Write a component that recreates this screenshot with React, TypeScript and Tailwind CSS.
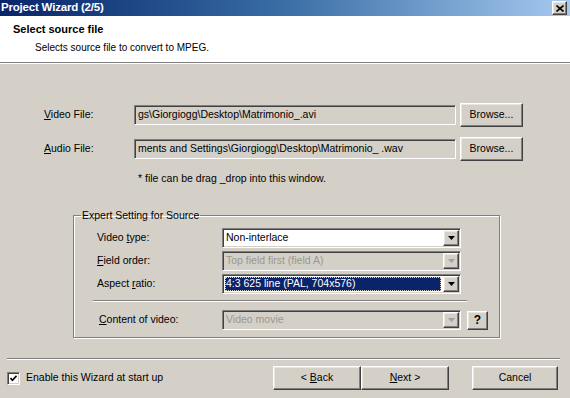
const raised =
  'border border-t-white border-l-white border-r-[#404040] border-b-[#404040] shadow-[inset_-1px_-1px_0_#808080,inset_1px_1px_0_#e8e6e1]';
const sunken =
  'border border-t-[#808080] border-l-[#808080] border-r-white border-b-white shadow-[inset_1px_1px_0_#404040,inset_-1px_-1px_0_#d4d0c8]';

const Arrow = ({ disabled }: { disabled?: boolean }) => (
  <svg width="7" height="4" viewBox="0 0 7 4">
    <path d="M0 0h7L3.5 4z" fill={disabled ? '#a0a0a0' : '#000'} />
  </svg>
);

interface ComboProps {
  value: string;
  disabled?: boolean;
  selected?: boolean;
}

const Combo = ({ value, disabled, selected }: ComboProps) => (
  <div
    className={`flex h-[20px] w-[239px] items-center ${sunken} ${
      disabled ? 'bg-[#d4d0c8] text-[#9a978f]' : 'bg-white text-black'
    }`}
  >
    <div className="flex h-full min-w-0 flex-1 items-center p-[2px]">
      {selected ? (
        <span className="flex h-full w-full items-center bg-[#0a246a] pl-[1px] text-white outline outline-1 outline-dotted outline-[#d4d0c8] -outline-offset-1">
          {value}
        </span>
      ) : (
        <span className="pl-[1px]">{value}</span>
      )}
    </div>
    <div className={`mr-[1px] flex h-[16px] w-[16px] items-center justify-center bg-[#d4d0c8] ${raised}`}>
      <Arrow disabled={disabled} />
    </div>
  </div>
);

const FileRow = ({ label, value }: { label: React.ReactNode; value: string }) => (
  <div className="flex h-[24px] items-center">
    <div className="w-[90px] pl-[44px] box-content">{label}</div>
    <div className={`flex h-[20px] w-[322px] items-center overflow-hidden bg-[#d4d0c8] pl-[3px] whitespace-nowrap ${sunken}`}>
      {value}
    </div>
    <button className={`ml-[4px] h-[24px] w-[63px] bg-[#d4d0c8] ${raised}`}>Browse...</button>
  </div>
);

const SettingRow = ({ label, children }: { label: React.ReactNode; children: React.ReactNode }) => (
  <div className="flex h-[20px] items-center">
    <div className="w-[125px] pl-[23px] box-content">{label}</div>
    {children}
  </div>
);

export default function App() {
  return (
    <div className="flex h-[398px] w-[570px] flex-col overflow-hidden bg-[#d4d0c8] font-['Liberation_Sans',Arial,sans-serif] text-[10.5px] text-black">
      {/* title bar */}
      <div className="flex h-[16px] shrink-0 items-center justify-between bg-gradient-to-r from-[#0a246a] via-[#3a6ea5] to-[#a6caf0] pl-[1px] pr-[3px]">
        <span className="text-[11.5px] font-bold tracking-[-0.2px] text-white">Project Wizard (2/5)</span>
        <div className={`flex h-[14px] w-[15px] items-center justify-center bg-[#d4d0c8] ${raised}`}>
          <svg width="8" height="7" viewBox="0 0 8 7">
            <path d="M0.5 0.5l7 6M7.5 0.5l-7 6" stroke="#000" strokeWidth="1.6" />
          </svg>
        </div>
      </div>

      {/* header */}
      <div className="flex h-[46px] shrink-0 flex-col bg-white pt-[6px]">
        <div className="pl-[13px] text-[11px] font-bold leading-[14px]">Select source file</div>
        <div className="mt-[5px] pl-[35px] text-[10px] leading-[13px]">Selects source file to convert to MPEG.</div>
      </div>
      <div className="h-[1px] shrink-0 bg-[#808080]" />
      <div className="h-[1px] shrink-0 bg-white" />

      {/* body */}
      <div className="flex flex-1 flex-col">
        <div className="mt-[39px] flex flex-col gap-[10px]">
          <FileRow
            label={
              <>
                <u>V</u>ideo File:
              </>
            }
            value="gs\Giorgiogg\Desktop\Matrimonio_.avi"
          />
          <FileRow
            label={
              <>
                <u>A</u>udio File:
              </>
            }
            value="ments and Settings\Giorgiogg\Desktop\Matrimonio_ .wav"
          />
        </div>
        <div className="mt-[11px] pl-[138px] leading-[13px]">* file can be drag _drop into this window.</div>

        <fieldset className="mx-[73px] mr-[70px] mt-[24px] h-[129px] border border-[#808080] px-0 pb-0 shadow-[inset_1px_1px_0_#fff,1px_1px_0_#fff]">
          <legend className="ml-[7px] px-[1px] leading-[13px]">Expert Setting for Source</legend>
          <div className="mt-[6px] flex flex-col gap-[3px]">
            <SettingRow
              label={
                <>
                  Video <u>t</u>ype:
                </>
              }
            >
              <Combo value="Non-interlace" />
            </SettingRow>
            <SettingRow
              label={
                <>
                  <u>F</u>ield order:
                </>
              }
            >
              <Combo value="Top field first (field A)" disabled />
            </SettingRow>
            <SettingRow
              label={
                <>
                  Aspect <u>r</u>atio:
                </>
              }
            >
              <Combo value="4:3 625 line (PAL, 704x576)" selected />
            </SettingRow>
          </div>
          <div className="ml-[19px] mt-[6px] h-[1px] w-[374px] bg-[#808080] shadow-[0_1px_0_#fff]" />
          <div className="mt-[9px] flex h-[20px] items-center">
            <div className="w-[123px] pl-[25px] box-content">
              <u>C</u>ontent of video:
            </div>
            <Combo value="Video movie" disabled />
            <button className={`ml-[6px] flex h-[19px] w-[21px] items-center justify-center bg-[#d4d0c8] text-[12px] font-bold ${raised}`}>
              ?
            </button>
          </div>
        </fieldset>

        {/* footer */}
        <div className="mx-[7px] mr-[10px] mt-[20px] h-[1px] bg-[#808080] shadow-[0_1px_0_#fff]" />
        <div className="mt-[7px] flex h-[24px] items-center">
          <div className="flex items-center pl-[7px]">
            <div className={`flex h-[13px] w-[13px] items-center justify-center bg-white ${sunken}`}>
              <svg width="7" height="7" viewBox="0 0 7 7">
                <path d="M0.5 3l2 2.2L6.5 0.8" stroke="#000" strokeWidth="1.6" fill="none" />
              </svg>
            </div>
            <span className="ml-[6px]">Enable this Wizard at start up</span>
          </div>
          <div className="ml-auto flex items-center pr-[12px]">
            <button className={`h-[24px] w-[88px] bg-[#d4d0c8] ${raised}`}>
              &lt; <u>B</u>ack
            </button>
            <button className={`h-[24px] w-[88px] bg-[#d4d0c8] ${raised}`}>
              <u>N</u>ext &gt;
            </button>
            <button className={`ml-[23px] h-[24px] w-[86px] bg-[#d4d0c8] ${raised}`}>Cancel</button>
          </div>
        </div>
      </div>
    </div>
  );
}
